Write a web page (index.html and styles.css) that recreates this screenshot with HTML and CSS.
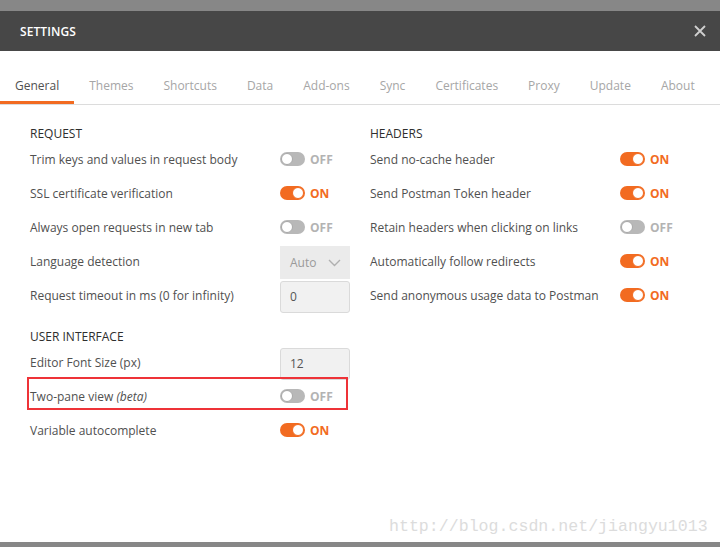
FILE: index.html
```html
<!DOCTYPE html>
<html>
<head>
<meta charset="utf-8">
<link rel="stylesheet" href="styles.css">
</head>
<body>
<div class="modal">
  <div class="modal-header">
    <span class="title">SETTINGS</span>
    <svg class="close" width="12" height="12" viewBox="0 0 12 12"><path d="M1 1 L11 11 M11 1 L1 11" stroke="#cfcfcf" stroke-width="1.8" fill="none"/></svg>
  </div>
  <div class="tabs">
    <span class="tab active">General</span>
    <span class="tab">Themes</span>
    <span class="tab">Shortcuts</span>
    <span class="tab">Data</span>
    <span class="tab">Add-ons</span>
    <span class="tab">Sync</span>
    <span class="tab">Certificates</span>
    <span class="tab">Proxy</span>
    <span class="tab">Update</span>
    <span class="tab">About</span>
  </div>
  <div class="content">
    <div class="column">
      <div class="heading">REQUEST</div>
      <div class="row"><span class="label">Trim keys and values in request body</span><span class="toggle off"><span class="track"></span><span class="state">OFF</span></span></div>
      <div class="row"><span class="label">SSL certificate verification</span><span class="toggle on"><span class="track"></span><span class="state">ON</span></span></div>
      <div class="row"><span class="label">Always open requests in new tab</span><span class="toggle off"><span class="track"></span><span class="state">OFF</span></span></div>
      <div class="row"><span class="label">Language detection</span><span class="select">Auto<svg width="13" height="8" viewBox="0 0 13 8"><path d="M1 1 L6.5 6.5 L12 1" stroke="#b0b0b0" stroke-width="1.4" fill="none"/></svg></span></div>
      <div class="row"><span class="label">Request timeout in ms (0 for infinity)</span><span class="input">0</span></div>
      <div class="heading spaced">USER INTERFACE</div>
      <div class="row"><span class="label">Editor Font Size (px)</span><span class="input">12</span></div>
      <div class="row highlight"><span class="label">Two-pane view <em>(beta)</em></span><span class="toggle off"><span class="track"></span><span class="state">OFF</span></span></div>
      <div class="row"><span class="label">Variable autocomplete</span><span class="toggle on"><span class="track"></span><span class="state">ON</span></span></div>
    </div>
    <div class="column">
      <div class="heading">HEADERS</div>
      <div class="row"><span class="label">Send no-cache header</span><span class="toggle on"><span class="track"></span><span class="state">ON</span></span></div>
      <div class="row"><span class="label">Send Postman Token header</span><span class="toggle on"><span class="track"></span><span class="state">ON</span></span></div>
      <div class="row"><span class="label">Retain headers when clicking on links</span><span class="toggle off"><span class="track"></span><span class="state">OFF</span></span></div>
      <div class="row"><span class="label">Automatically follow redirects</span><span class="toggle on"><span class="track"></span><span class="state">ON</span></span></div>
      <div class="row"><span class="label">Send anonymous usage data to Postman</span><span class="toggle on"><span class="track"></span><span class="state">ON</span></span></div>
    </div>
  </div>
  <div class="watermark">http://blog.csdn.net/jiangyu1013</div>
</div>
</body>
</html>
```
FILE: styles.css
```css
html, body {
  margin: 0;
  padding: 0;
}
body {
  background: #878787;
  padding-top: 11px;
  height: 547px;
  box-sizing: border-box;
  overflow: hidden;
  font-family: "Open Sans", "Noto Sans", sans-serif;
}
.modal {
  position: relative;
  background: #ffffff;
  height: 531px;
}
.modal-header {
  height: 40px;
  background: #474747;
  display: flex;
  align-items: center;
  justify-content: space-between;
  padding: 0 14px 0 20px;
}
.title {
  color: #ffffff;
  font-size: 12px;
  font-weight: 600;
  letter-spacing: 0.1px;
}
.close {
  display: block;
}
.tabs {
  height: 53px;
  display: flex;
  align-items: flex-end;
  border-bottom: 1px solid #dcdcdc;
}
.tab {
  padding: 0 15px 7px;
  line-height: 16px;
  font-size: 12px;
  color: #a6a6a6;
  border-bottom: 3px solid transparent;
}
.tab.active {
  color: #505050;
  border-bottom-color: #f26b21;
}
.content {
  display: flex;
  gap: 20px;
  padding: 19px 30px 0;
}
.column {
  width: 320px;
  display: flex;
  flex-direction: column;
}
.heading {
  line-height: 17px;
  padding-top: 1px;
  font-size: 12px;
  color: #2e2e2e;
}
.heading.spaced {
  margin-top: 15px;
}
.row {
  position: relative;
  height: 34px;
  display: flex;
  align-items: center;
}
.label {
  width: 250px;
  font-size: 12px;
  color: #505050;
}
.highlight::after {
  content: "";
  position: absolute;
  top: -2px;
  bottom: 3px;
  left: -3px;
  right: 2px;
  border: 2px solid #ee3338;
}
.toggle {
  display: flex;
  align-items: center;
  gap: 5px;
}
.track {
  position: relative;
  width: 25px;
  height: 14px;
  border-radius: 7px;
  box-sizing: border-box;
}
.track::after {
  content: "";
  position: absolute;
  top: 1px;
  width: 12px;
  height: 12px;
  border-radius: 50%;
  background: #ffffff;
  box-sizing: border-box;
}
.off .track {
  background: #b8b8b8;
}
.off .track::after {
  left: 1px;
  border: 1px solid #a8a8a8;
}
.on .track {
  background: #f26b21;
}
.on .track::after {
  right: 1px;
  border: 1px solid #f26b21;
}
.state {
  font-size: 12px;
  font-weight: 700;
}
.off .state {
  color: #b3b3b3;
}
.on .state {
  color: #f26b21;
}
.select {
  width: 70px;
  height: 33px;
  box-sizing: border-box;
  background: #ebebeb;
  display: flex;
  align-items: center;
  justify-content: space-between;
  padding: 0 9px 0 10px;
  font-size: 12px;
  color: #9a9a9a;
  margin-top: 3px;
}
.input {
  width: 70px;
  height: 32px;
  box-sizing: border-box;
  background: #f1f1f1;
  border: 1px solid #dadada;
  border-radius: 3px;
  display: flex;
  align-items: center;
  padding: 0 9px;
  font-size: 12px;
  color: #555555;
  margin-top: 3px;
}
.watermark {
  position: absolute;
  left: 389px;
  top: 506px;
  font-family: "Liberation Mono", monospace;
  font-size: 16.6px;
  color: #dcdcdc;
}
```
